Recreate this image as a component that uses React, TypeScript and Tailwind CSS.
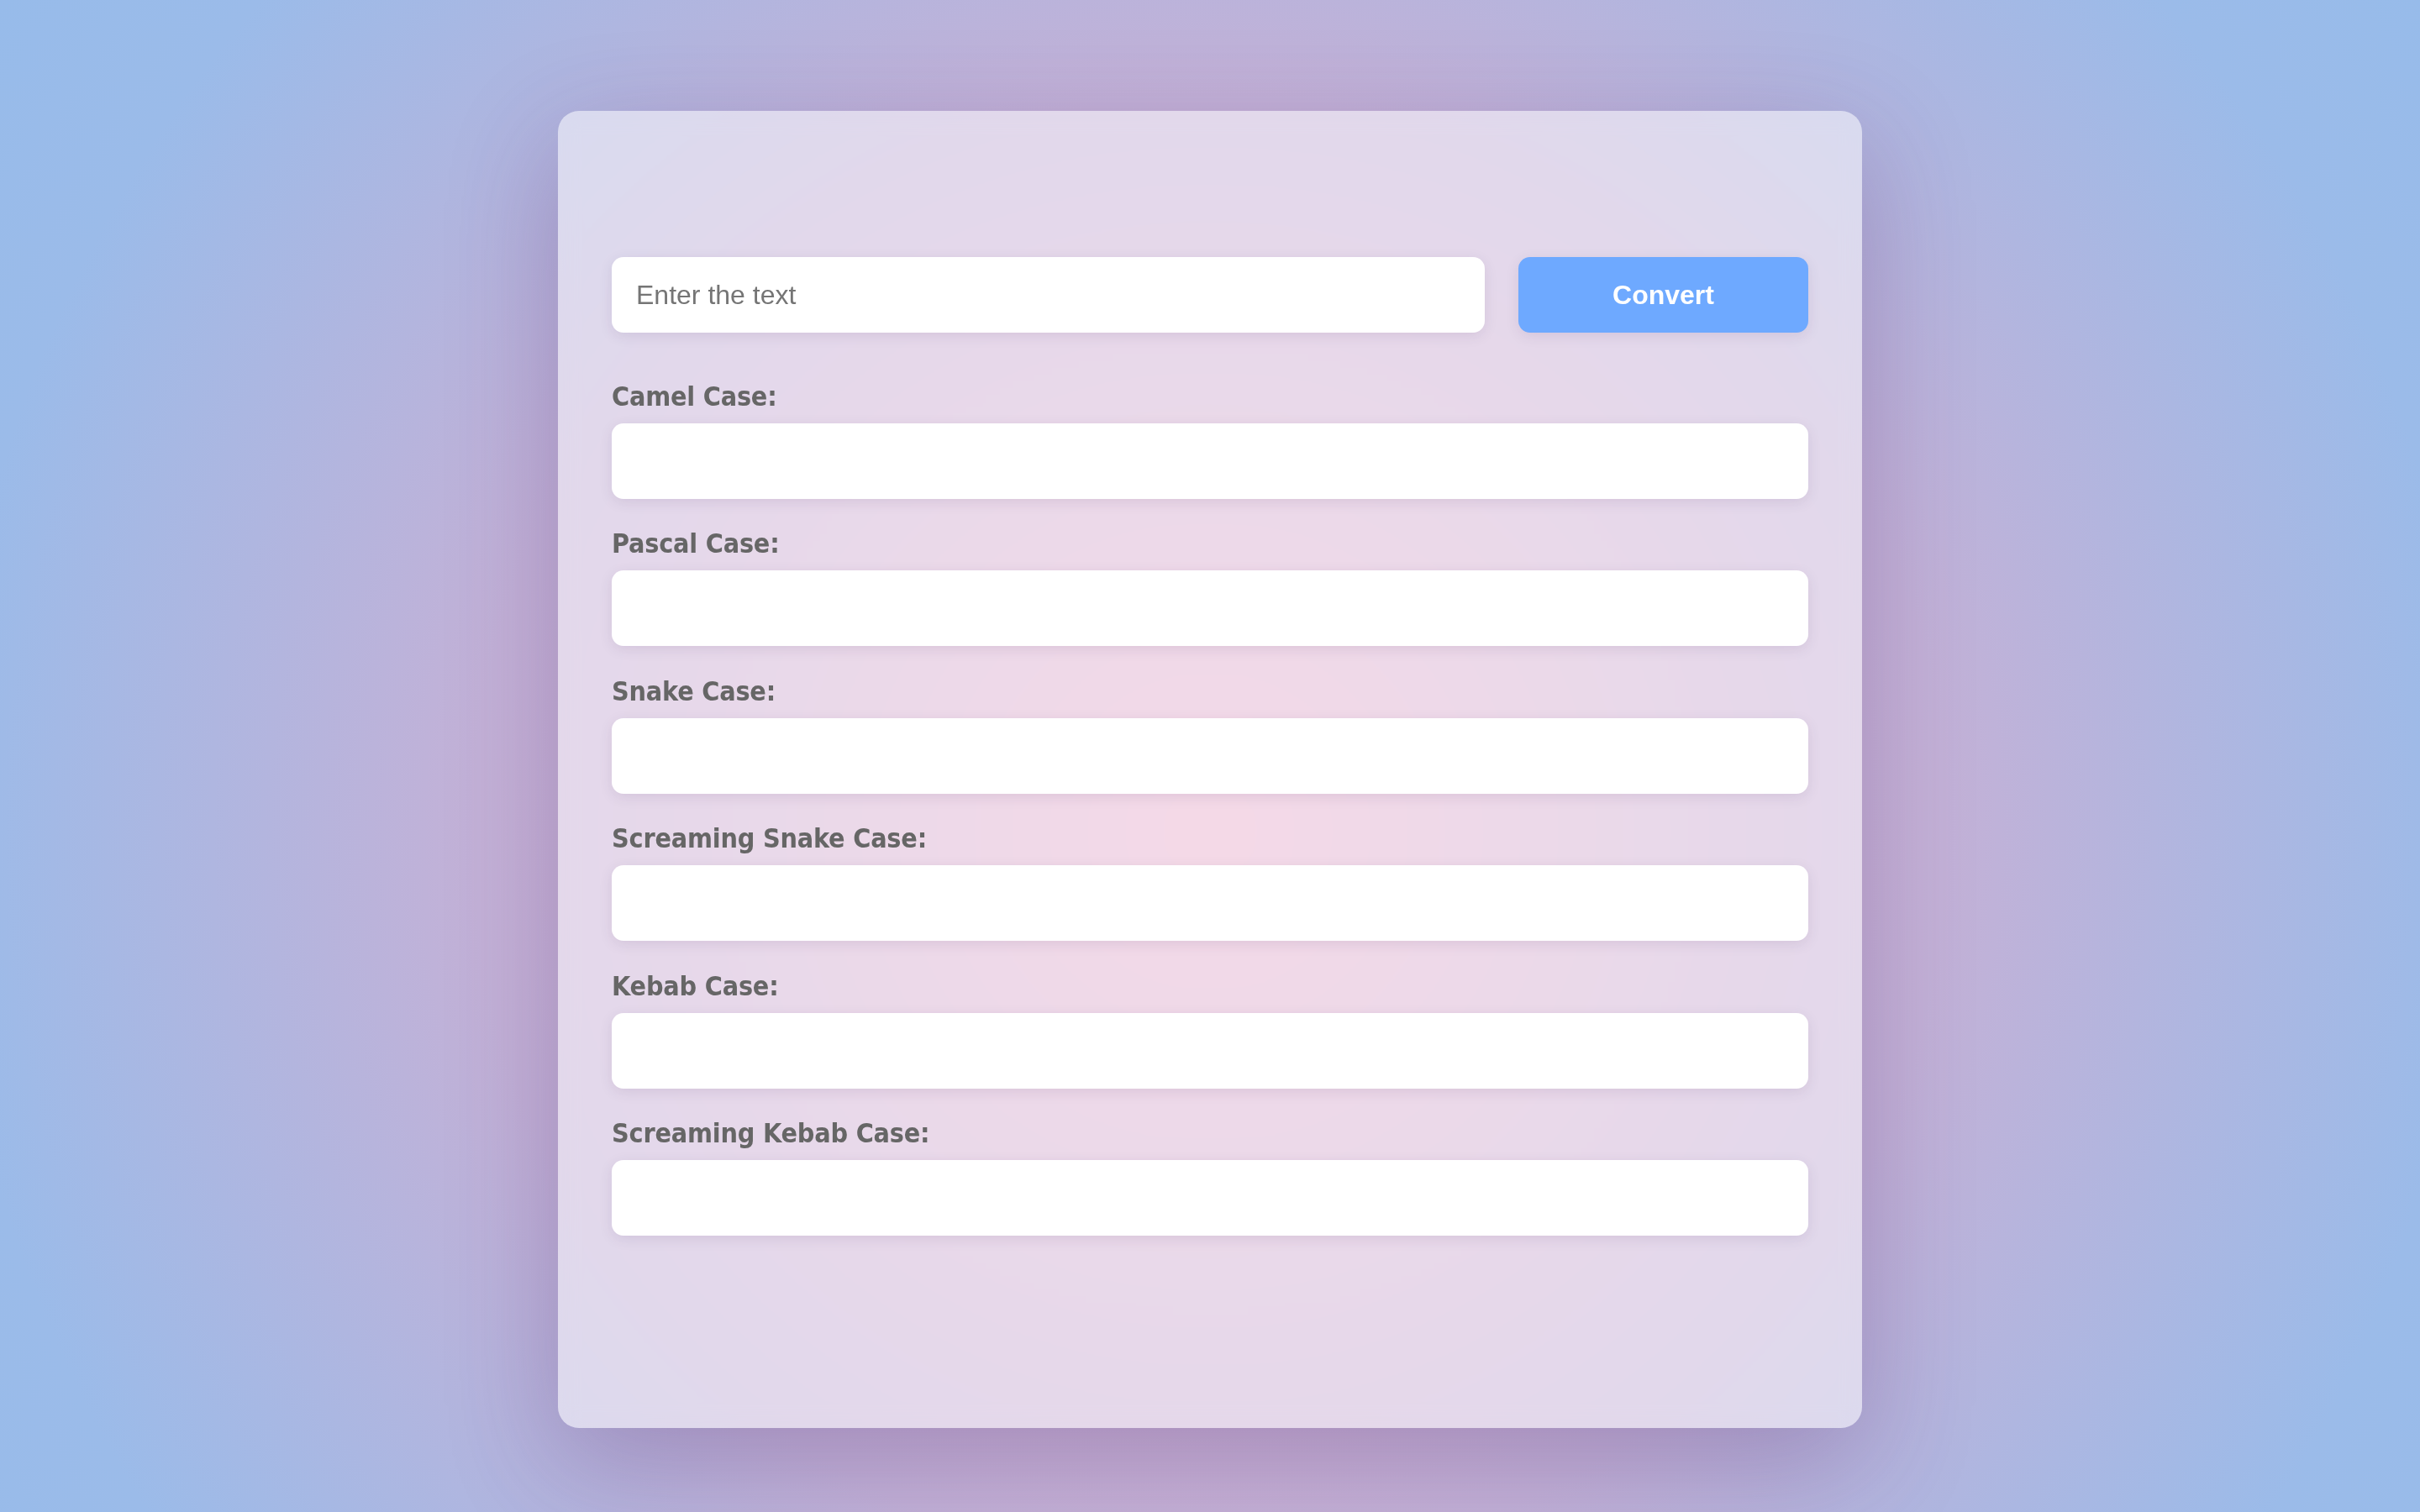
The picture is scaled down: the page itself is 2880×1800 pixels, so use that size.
import { useState } from 'react';

const labels = [
  'Camel Case:',
  'Pascal Case:',
  'Snake Case:',
  'Screaming Snake Case:',
  'Kebab Case:',
  'Screaming Kebab Case:',
];

const words = (s: string) =>
  s
    .replace(/([a-z0-9])([A-Z])/g, '$1 $2')
    .split(/[^A-Za-z0-9]+/)
    .filter(Boolean)
    .map((w) => w.toLowerCase());

const cap = (w: string) => w.charAt(0).toUpperCase() + w.slice(1);

const convert = (s: string): string[] => {
  const w = words(s);
  if (!w.length) return labels.map(() => '');
  return [
    w[0] + w.slice(1).map(cap).join(''),
    w.map(cap).join(''),
    w.join('_'),
    w.join('_').toUpperCase(),
    w.join('-'),
    w.join('-').toUpperCase(),
  ];
};

export default function App() {
  const [text, setText] = useState('');
  const [out, setOut] = useState<string[]>(labels.map(() => ''));

  return (
    <div className="min-h-screen w-full bg-[radial-gradient(circle_at_50%_55%,#eab3cf_0%,#c3b1d7_50%,#9bbbe9_86%,#97bbea_100%)] flex justify-center items-start">
      <div className="mt-[132px] w-[1552px] rounded-[25px] bg-white/50 backdrop-blur-md shadow-[0_40px_130px_rgba(70,40,110,0.28)] pt-[174px] pb-[229px] px-[64px]">
        {/* input row */}
        <div className="flex gap-[40px]">
          <input
            value={text}
            onChange={(e) => setText(e.target.value)}
            placeholder="Enter the text"
            className="flex-1 h-[90px] rounded-[14px] bg-white px-[29px] text-[32px] text-[#333] placeholder:text-[#757575] font-['Liberation_Sans',Arial,sans-serif] outline-none shadow-[0_4px_16px_rgba(60,30,90,0.1)]"
          />
          <button
            onClick={() => setOut(convert(text))}
            className="w-[345px] h-[90px] rounded-[14px] bg-[#6ea9ff] text-white text-[32px] font-bold font-['Liberation_Sans',Arial,sans-serif] shadow-[0_4px_16px_rgba(60,30,90,0.1)]"
          >
            Convert
          </button>
        </div>

        <div className="mt-[56px] flex flex-col gap-[33.4px]">
          {labels.map((l, i) => (
            <div key={l} className="flex flex-col">
              <label className="block mb-[12px] text-[32px] leading-[40px] font-bold tracking-[-0.2px] text-[#666] font-['DejaVu_Sans_Condensed','DejaVu_Sans',sans-serif] [font-stretch:condensed]">
                {l}
              </label>
              <input
                readOnly
                value={out[i]}
                className="h-[90px] w-full rounded-[14px] bg-white px-[29px] text-[32px] text-[#333] font-['Liberation_Sans',Arial,sans-serif] outline-none shadow-[0_4px_16px_rgba(60,30,90,0.1)]"
              />
            </div>
          ))}
        </div>
      </div>
    </div>
  );
}
